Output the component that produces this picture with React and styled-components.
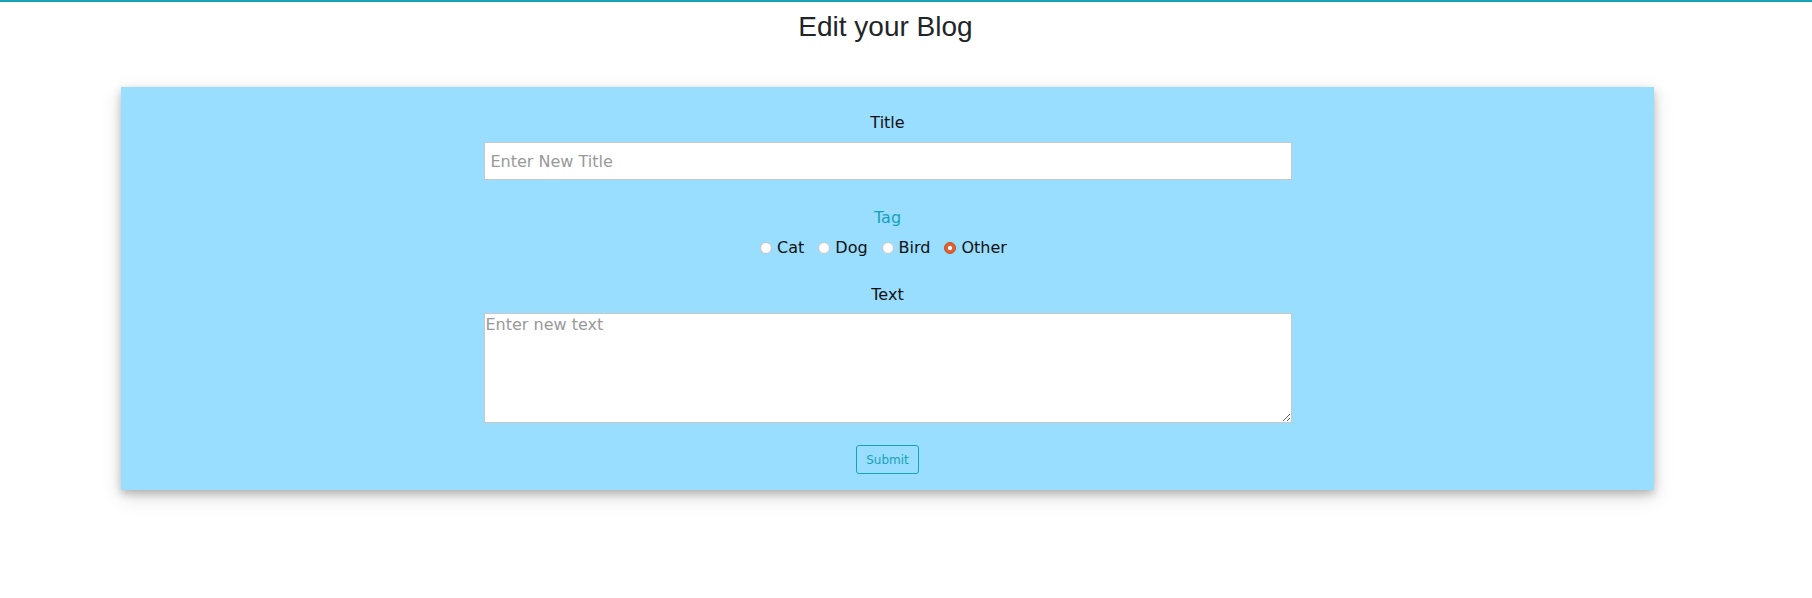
import React from 'react';
import styled, { createGlobalStyle } from 'styled-components';

const GlobalStyle = createGlobalStyle`
  html, body {
    margin: 0;
    padding: 0;
    background: #fff;
  }
  body {
    font-family: "DejaVu Sans", sans-serif;
    font-size: 16px;
    border-top: 2px solid #17a2b8;
  }
`;

const tags = ['Cat', 'Dog', 'Bird', 'Other'];

const App = () => (
  <>
    <GlobalStyle />
    <Page>
      <Heading>Edit your Blog</Heading>
      <Card>
        <Label htmlFor='title'>Title</Label>
        <TitleInput id='title' type='text' placeholder='Enter New Title' />

        <Label as='div' $accent>Tag</Label>
        <RadioRow>
          {tags.map((tag) => (
            <Option key={tag}>
              <Radio type='radio' name='tag' value={tag} defaultChecked={tag === 'Other'} />
              {tag}
            </Option>
          ))}
        </RadioRow>

        <Label htmlFor='text' $tight>Text</Label>
        <TextArea id='text' placeholder='Enter new text' />

        <Submit type='button'>Submit</Submit>
      </Card>
    </Page>
  </>
);

const Page = styled.main`
  display: flex;
  flex-direction: column;
  align-items: center;
  padding: 0 158px 60px 121px;
`;

const Heading = styled.h1`
  margin: 7.5px 0 44px;
  padding-right: 4px;
  font-family: "Liberation Sans", Arial, sans-serif;
  font-size: 28px;
  font-weight: 400;
  line-height: 1.2;
  color: #212529;
`;

const Card = styled.form`
  box-sizing: border-box;
  width: 100%;
  display: flex;
  flex-direction: column;
  align-items: center;
  padding: 26px 0 16px;
  background-color: #99ddff;
  box-shadow: 0 4px 8px rgba(0, 0, 0, 0.22), 0 6px 20px rgba(0, 0, 0, 0.14);
`;

const Label = styled.label`
  display: block;
  font-size: 16px;
  line-height: 19px;
  color: ${(p) => (p.$accent ? '#17a2b8' : '#111')};
  margin-bottom: ${(p) => (p.$accent ? '11px' : p.$tight ? '9px' : '10px')};
`;

const TitleInput = styled.input`
  box-sizing: border-box;
  width: 808px;
  height: 38px;
  padding: 0 6px;
  border: 1px solid #c8c8c8;
  background: #fff;
  font-family: "DejaVu Sans", sans-serif;
  font-size: 16px;
  margin-bottom: 28px;
  outline: none;
  &::placeholder {
    color: #999;
  }
`;

const RadioRow = styled.div`
  display: flex;
  align-items: center;
  gap: 14px;
  padding-right: 8px;
  height: 19px;
  margin-bottom: 28px;
`;

const Option = styled.label`
  display: flex;
  align-items: center;
  gap: 5px;
  font-size: 16px;
  line-height: 19px;
  color: #111;
`;

const Radio = styled.input`
  appearance: none;
  box-sizing: border-box;
  width: 12px;
  height: 12px;
  margin: 0;
  border-radius: 50%;
  border: 1px solid #c4c4c4;
  background: #fff;
  &:checked {
    border-color: #c94e22;
    background: radial-gradient(circle, #fff 0 1.8px, #e0602e 2.4px);
  }
`;

const TextArea = styled.textarea`
  box-sizing: border-box;
  width: 808px;
  height: 110px;
  padding: 1px;
  border: 1px solid #c8c8c8;
  background: #fff;
  font-family: "DejaVu Sans", sans-serif;
  font-size: 16px;
  margin: 0 0 22px;
  outline: none;
  &::placeholder {
    color: #999;
  }
`;

const Submit = styled.button`
  box-sizing: border-box;
  height: 29px;
  padding: 0 9.5px;
  font-family: "DejaVu Sans", sans-serif;
  font-size: 12px;
  color: #17a2b8;
  background: transparent;
  border: 1px solid #17a2b8;
  border-radius: 3px;
  cursor: pointer;
`;

export default App;
